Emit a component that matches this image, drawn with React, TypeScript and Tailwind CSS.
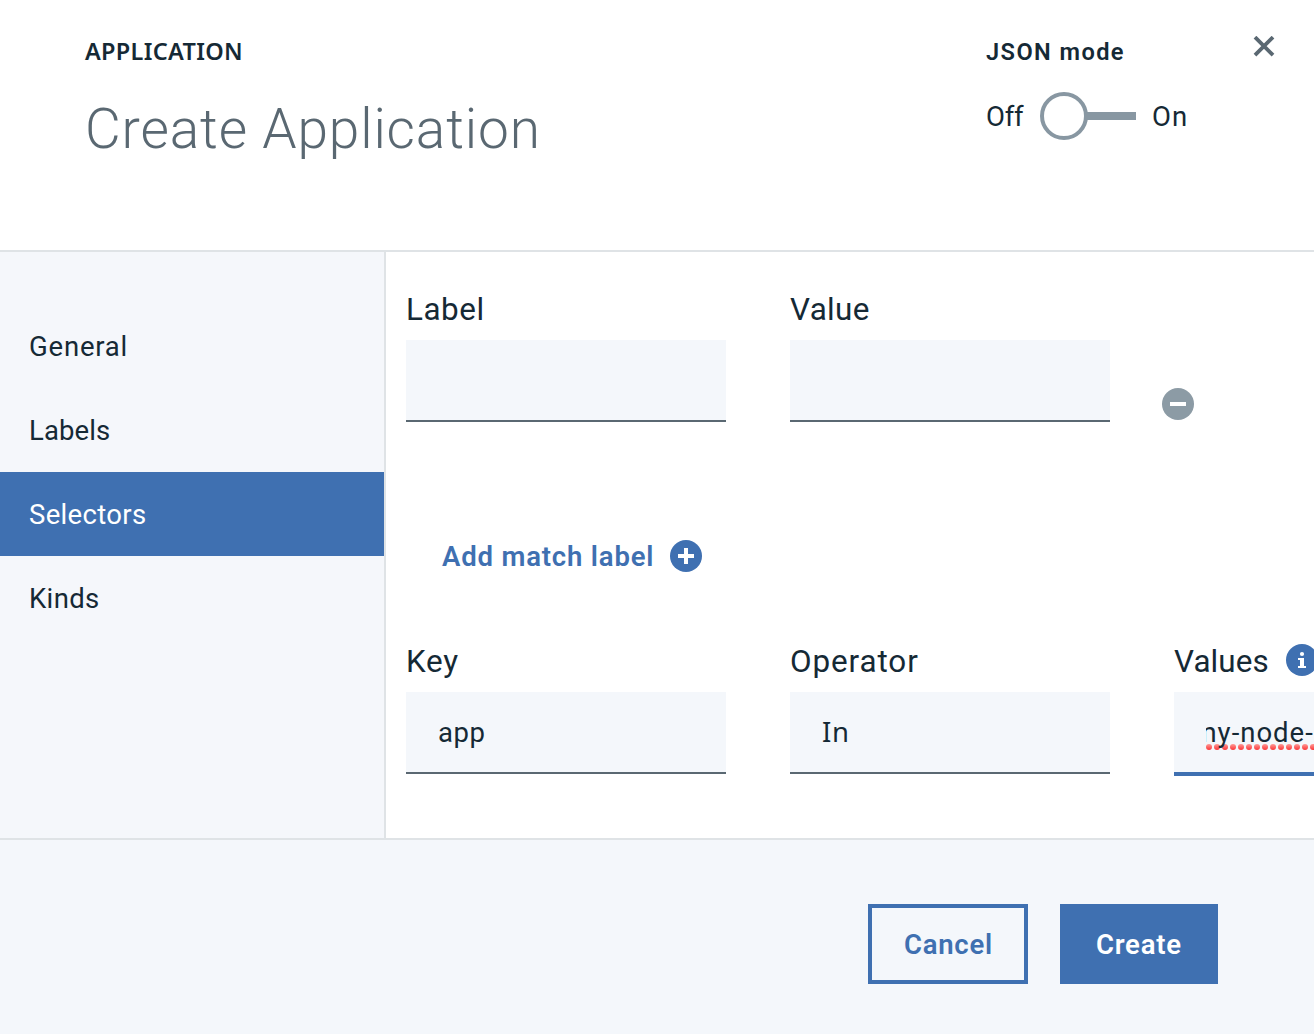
import type { ReactNode } from 'react';

const sections = [
  { name: 'General', tracking: 'tracking-[0.8px]' },
  { name: 'Labels', tracking: 'tracking-[0.11px]' },
  { name: 'Selectors', tracking: 'tracking-[0.34px]', active: true },
  { name: 'Kinds', tracking: 'tracking-[0.35px]' },
];

function Header() {
  return (
    <header className="flex h-[252px] shrink-0 items-start border-b-2 border-[#dfe3e6] bg-white">
      <div className="flex-1 pl-[85px] pt-[35px]">
        <div className="font-['Noto_Sans',sans-serif] text-[23.5px] font-semibold leading-8 tracking-[0.3px]">APPLICATION</div>
        <h1 className="mt-[22px] text-[55px] font-light leading-[80px] tracking-[0.86px] text-[#5a6872]">Create Application</h1>
      </div>
      <div className="w-[267px] shrink-0 pt-9">
        <div className="text-[23.6px] font-semibold leading-8 tracking-[1.42px]">JSON mode</div>
        <div className="mt-6 flex h-12 items-center text-[27.5px]">
          <span className="w-[54px] pt-0.5 tracking-[-0.2px]">Off</span>
          <button className="flex items-center" aria-label="Toggle JSON mode">
            <span className="size-12 rounded-full border-4 border-[#8897a2] bg-white" />
            <span className="-ml-px h-2 w-[49px] bg-[#8897a2]" />
          </button>
          <span className="ml-4 pt-0.5 tracking-[1.1px]">On</span>
        </div>
      </div>
      <button className="mr-[39px] mt-9 size-[22px]" aria-label="Close">
        <svg viewBox="0 0 22 22" className="size-[22px]" fill="none" stroke="#5a6872" strokeWidth="3.8">
          <path d="M2 1.1 20 19.1M20 1.1 2 19.1" />
        </svg>
      </button>
    </header>
  );
}

function Sidebar() {
  return (
    <nav className="w-[386px] shrink-0 border-r-2 border-[#dfe3e6] bg-[#f5f7fb] pt-[52px] text-[27.5px]">
      {sections.map((s) => (
        <div key={s.name} className={`flex h-[84px] items-center pl-[29px] pt-0.5 ${s.tracking} ${s.active ? 'bg-[#3f70b1] text-white' : ''}`}>
          {s.name}
        </div>
      ))}
    </nav>
  );
}

function Field({ label, tracking, info, focused, children }: { label: string; tracking: string; info?: boolean; focused?: boolean; children?: ReactNode }) {
  return (
    <div className="w-80 shrink-0">
      <div className={`flex h-16 items-center text-[31.4px] ${tracking}`}>
        <span className="pt-[3px]">{label}</span>
        {info && (
          <svg viewBox="0 0 32 32" className="ml-[17px] size-8">
            <circle cx="16" cy="16" r="16" fill="#3f70b1" />
            <circle cx="16" cy="10" r="2.1" fill="#fff" />
            <path d="M12 14h6v8h2v2h-8v-2h2v-6h-2z" fill="#fff" />
          </svg>
        )}
      </div>
      <div className={`flex items-start bg-[#f4f7fb] px-8 text-[27.5px] leading-[82px] ${focused ? 'h-[84px] border-b-4 border-[#3f70b1]' : 'h-[82px] border-b-2 border-[#5a6872]'}`}>
        {children}
      </div>
    </div>
  );
}

function Selectors() {
  return (
    <main className="min-w-0 flex-1 overflow-hidden bg-white pl-5 pt-6">
      <div className="flex">
        <Field label="Label" tracking="tracking-[0.55px]" />
        <div className="w-16 shrink-0" />
        <Field label="Value" tracking="tracking-[0.35px]" />
        <button className="ml-[52px] mt-[112px] size-8 shrink-0" aria-label="Remove label">
          <svg viewBox="0 0 32 32" className="size-8">
            <circle cx="16" cy="16" r="16" fill="#8c9ba5" />
            <path d="M8 14h16v4H8z" fill="#fff" />
          </svg>
        </button>
      </div>
      <button className="ml-9 mt-[118px] flex h-8 items-center text-[27.5px] font-semibold tracking-[0.83px] text-[#3f70b1]">
        <span className="w-[228px] pt-0.5 text-left">Add match label</span>
        <svg viewBox="0 0 32 32" className="size-8">
          <circle cx="16" cy="16" r="16" fill="#3f70b1" />
          <path d="M14 8h4v6h6v4h-6v6h-4v-6H8v-4h6z" fill="#fff" />
        </svg>
      </button>
      <div className="mt-14 flex gap-16">
        <Field label="Key" tracking="tracking-[0.75px]">
          <span className="tracking-[0.56px]">app</span>
        </Field>
        <Field label="Operator" tracking="tracking-[0.9px]">
          <span className="font-['Noto_Sans',sans-serif] leading-[80px] tracking-[0.8px]">In</span>
        </Field>
        <Field label="Values" tracking="tracking-[0.1px]" info focused>
          <div className="relative h-20 w-64 overflow-hidden">
            <svg className="absolute left-0 top-[52px] h-[6px] w-64">
              <defs>
                <linearGradient id="spelling" x1="0" y1="0" x2="0" y2="1">
                  <stop offset="0" stopColor="#ff9a96" />
                  <stop offset="1" stopColor="#fb3538" />
                </linearGradient>
              </defs>
              {Array.from({ length: 32 }, (_, i) => (
                <circle key={i} cx={3 + i * 8} cy="3" r="3" fill="url(#spelling)" />
              ))}
            </svg>
            <span className="relative -ml-[13.5px] whitespace-nowrap tracking-[1px]">my-node-app</span>
          </div>
        </Field>
      </div>
    </main>
  );
}

export default function App() {
  return (
    <div className="flex h-[1034px] w-[1314px] flex-col overflow-hidden bg-white font-['Roboto',sans-serif] text-[#152935]">
      <Header />
      <div className="flex h-[586px] shrink-0">
        <Sidebar />
        <Selectors />
      </div>
      <footer className="flex flex-1 items-start justify-end gap-8 border-t-2 border-[#dfe3e6] bg-[#f4f7fb] pr-24 pt-16 text-[27.5px] font-semibold">
        <button className="h-20 w-40 border-4 border-[#3f70b1] pl-8 pt-0.5 text-left tracking-[0.75px] text-[#3f70b1]">Cancel</button>
        <button className="h-20 w-[158px] bg-[#3f70b1] pl-9 pt-0.5 text-left tracking-[0.75px] text-white">Create</button>
      </footer>
    </div>
  );
}
